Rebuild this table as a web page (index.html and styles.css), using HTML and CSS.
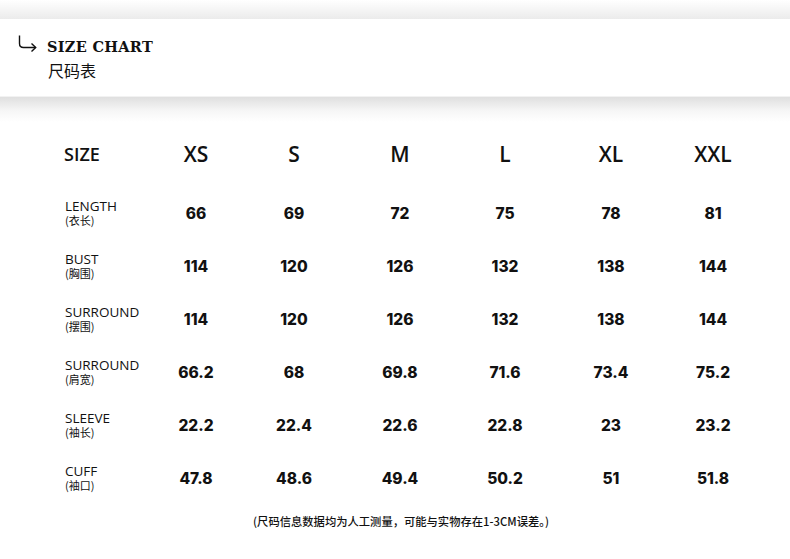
FILE: index.html
```html
<!DOCTYPE html>
<html lang="zh">
<head>
<meta charset="utf-8">
<title>Size Chart</title>
<link rel="stylesheet" href="styles.css">
</head>
<body>
<div class="top-shade"></div>
<header class="banner">
  <svg class="arrow" width="20" height="18" viewBox="0 0 20 18" aria-hidden="true">
    <path d="M1.5 0.5 V8.5 Q1.5 12.5 5.5 12.5 H17.5" fill="none" stroke="#111" stroke-width="1.4"/>
    <path d="M13.5 8.5 L17.7 12.5 L13.5 16.5" fill="none" stroke="#111" stroke-width="1.4"/>
  </svg>
  <div class="titles">
    <div class="title-en">SIZE CHART</div>
    <div class="title-cn">尺码表</div>
  </div>
</header>
<div class="bottom-shade"></div>

<main class="chart">
  <div class="row head">
    <div class="label-head">SIZE</div>
    <div class="size">XS</div><div class="size">S</div><div class="size">M</div><div class="size">L</div><div class="size">XL</div><div class="size">XXL</div>
  </div>
  <div class="row">
    <div class="label"><span class="en">LENGTH</span><span class="cn">(衣长)</span></div>
    <div class="val">66</div><div class="val">69</div><div class="val">72</div><div class="val">75</div><div class="val">78</div><div class="val">81</div>
  </div>
  <div class="row">
    <div class="label"><span class="en">BUST</span><span class="cn">(胸围)</span></div>
    <div class="val">114</div><div class="val">120</div><div class="val">126</div><div class="val">132</div><div class="val">138</div><div class="val">144</div>
  </div>
  <div class="row">
    <div class="label"><span class="en">SURROUND</span><span class="cn">(摆围)</span></div>
    <div class="val">114</div><div class="val">120</div><div class="val">126</div><div class="val">132</div><div class="val">138</div><div class="val">144</div>
  </div>
  <div class="row">
    <div class="label"><span class="en">SURROUND</span><span class="cn">(肩宽)</span></div>
    <div class="val">66.2</div><div class="val">68</div><div class="val">69.8</div><div class="val">71.6</div><div class="val">73.4</div><div class="val">75.2</div>
  </div>
  <div class="row">
    <div class="label"><span class="en">SLEEVE</span><span class="cn">(袖长)</span></div>
    <div class="val">22.2</div><div class="val">22.4</div><div class="val">22.6</div><div class="val">22.8</div><div class="val">23</div><div class="val">23.2</div>
  </div>
  <div class="row">
    <div class="label"><span class="en">CUFF</span><span class="cn">(袖口)</span></div>
    <div class="val">47.8</div><div class="val">48.6</div><div class="val">49.4</div><div class="val">50.2</div><div class="val">51</div><div class="val">51.8</div>
  </div>
  <p class="note">(尺码信息数据均为人工测量，可能与实物存在1-3CM误差。)</p>
</main>
</body>
</html>
```

FILE: styles.css
```css
* { box-sizing: border-box; }
html, body { margin: 0; padding: 0; background: #fff; }
body {
  width: 790px;
  height: 559px;
  overflow: hidden;
  color: #111;
  font-family: "Open Sans", "Noto Sans CJK SC", sans-serif;
}

.top-shade {
  height: 19px;
  background: linear-gradient(#ffffff, #ebebeb);
}
.banner {
  height: 78px;
  background: #fff;
  border-bottom: 1px solid #f2f2f2;
  display: flex;
  align-items: flex-start;
  padding: 16px 0 0 18px;
}
.arrow { display: block; margin-right: 9px; }
.titles { display: flex; flex-direction: column; }
.title-en {
  font-family: "DejaVu Serif", serif;
  font-weight: 700;
  font-size: 14.5px;
  line-height: 20px;
  margin-top: 2px;
  letter-spacing: 0.3px;
}
.title-cn {
  font-family: "Noto Sans CJK SC", sans-serif;
  font-size: 16px;
  line-height: 22px;
  margin-top: 2px;
  padding-left: 1px;
}
.bottom-shade {
  height: 25px;
  background: linear-gradient(#dfdfdf, #f6f6f6 55%, #ffffff);
}

.chart { padding-left: 64px; }
.row {
  display: grid;
  grid-template-columns: 84px 96px 100px 112px 98px 114px 90px;
  align-items: center;
  height: 53px;
}
.row.head { height: 64px; }
.label-head {
  font-size: 18px;
  font-weight: 600;
}
.size {
  text-align: center;
  font-size: 21px;
  font-weight: 600;
}
.label {
  display: flex;
  flex-direction: column;
  padding-left: 1px;
  margin-top: -1px;
}
.label .en {
  font-size: 13.5px;
  line-height: 16px;
  font-weight: 500;
}
.label .cn {
  font-family: "Noto Sans CJK SC", sans-serif;
  font-size: 11px;
  line-height: 13px;
}
.val {
  text-align: center;
  font-family: Inter, "Open Sans", sans-serif;
  font-weight: 800;
  font-size: 15.5px;
  padding-top: 1px;
}
.note {
  margin: 0 0 0 -64px;
  height: 34px;
  line-height: 34px;
  text-align: center;
  font-family: "Noto Sans CJK SC", sans-serif;
  font-weight: 500;
  font-size: 11.3px;
  padding-left: 12px;
}
```
